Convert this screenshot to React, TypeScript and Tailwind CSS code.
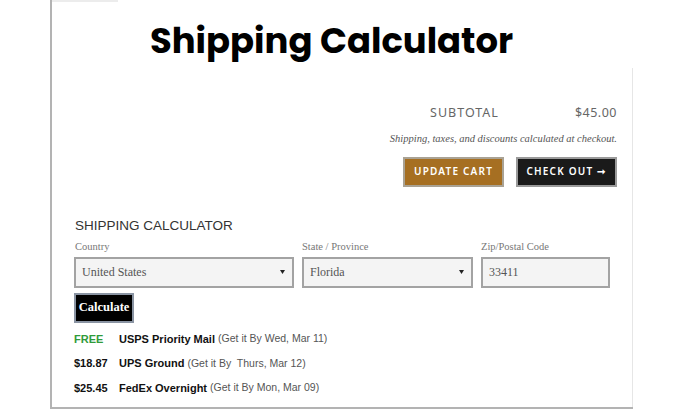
import React from "react";

const serif = { fontFamily: '"Liberation Serif", "DejaVu Serif", serif' };

function Select({ value, w }: { value: string; w: string }) {
  return (
    <div className={`${w} h-[31px] border-2 border-[#a3a3a3] bg-[#f4f4f4] flex items-center justify-between pl-[6px] pr-[7px]`}>
      <span className="text-[12px] text-[#555]" style={serif}>{value}</span>
      <svg width="5" height="4" viewBox="0 0 5 4"><path d="M0 0h5L2.5 4z" fill="#222" /></svg>
    </div>
  );
}

export default function App() {
  return (
    <div className="w-[680px] h-[409px] bg-white overflow-hidden">
      <div className="ml-[50px] w-[583px] h-[409px] border-l-2 border-b-2 border-[#b3b3b3] flex flex-col">
        <div className="h-[2px] w-[66px] bg-[#ececec]" />
        <div className="h-[66px] pl-[98px] pt-[19px]">
          <h1 className="text-[35.4px] leading-[40px] font-bold text-black" style={{ fontFamily: 'Poppins, Inter, "Noto Sans", sans-serif' }}>
            Shipping Calculator
          </h1>
        </div>
        <div className="flex-1 border-r border-[#e6e6e6] flex flex-col pr-[15px]">
          <div className="flex justify-end items-center mt-[37px] h-[16px] text-[12.5px] text-[#666] tracking-[1px]" style={{ fontFamily: '"Noto Sans", "Open Sans", sans-serif' }}>
            <span className="mr-[76px]">SUBTOTAL</span>
            <span className="tracking-[0.5px]">$45.00</span>
          </div>
          <div className="flex justify-end mt-[10px] text-[10.5px] italic text-[#555]" style={serif}>
            Shipping, taxes, and discounts calculated at checkout.
          </div>
          <div className="flex justify-end gap-[12px] mt-[10px]">
            <div className="w-[101px] h-[30px] bg-[#a66f22] border-2 border-[#a9a294] flex items-center justify-center text-white text-[10px] font-semibold tracking-[1.2px]" style={{ fontFamily: '"Noto Sans", "Open Sans", sans-serif' }}>
              UPDATE CART
            </div>
            <div className="w-[101px] h-[30px] bg-[#1a1a1a] border-2 border-[#9a9a9a] flex items-center justify-center text-white text-[10px] font-semibold tracking-[1.2px]" style={{ fontFamily: '"Noto Sans", "Open Sans", sans-serif' }}>
              CHECK OUT <span className="ml-[4px] font-bold">➞</span>
            </div>
          </div>
          <div className="pl-[22px] mt-[30px]" style={{ fontFamily: '"Liberation Sans", Arial, sans-serif' }}>
            <div className="ml-[1px] text-[13.5px] leading-[18px] text-[#333]">SHIPPING CALCULATOR</div>
            <div className="flex mt-[5px]">
              <div className="flex flex-col">
                <span className="ml-[1px] text-[10.5px] text-[#777] leading-[13px] mb-[4px]" style={serif}>Country</span>
                <Select value="United States" w="w-[220px]" />
              </div>
              <div className="flex flex-col ml-[8px]">
                <span className="text-[10.5px] text-[#777] leading-[13px] mb-[4px]" style={serif}>State / Province</span>
                <Select value="Florida" w="w-[171px]" />
              </div>
              <div className="flex flex-col ml-[8px]">
                <span className="text-[10.5px] text-[#777] leading-[13px] mb-[4px]" style={serif}>Zip/Postal Code</span>
                <div className="w-[129px] h-[31px] border-2 border-[#a3a3a3] bg-[#f4f4f4] flex items-center pl-[6px]">
                  <span className="text-[12px] text-[#555]" style={serif}>33411</span>
                </div>
              </div>
            </div>
            <div className="mt-[5px] w-[60px] h-[30px] bg-black border-2 border-[#8a94a3] flex items-center justify-center text-white text-[12.5px] font-bold" style={serif}>
              Calculate
            </div>
            <div className="mt-[4px] flex flex-col">
              {[
                { p: "FREE", c: "text-[#2f9b3a]", n: "USPS Priority Mail", d: "(Get it By Wed, Mar 11)" },
                { p: "$18.87", c: "text-[#111]", n: "UPS Ground", d: "(Get it By  Thurs, Mar 12)" },
                { p: "$25.45", c: "text-[#111]", n: "FedEx Overnight", d: "(Get it By Mon, Mar 09)" },
              ].map((r) => (
                <div key={r.p} className="flex items-center h-[24.5px]">
                  <span className={`w-[45px] text-[11px] font-bold ${r.c}`}>{r.p}</span>
                  <span className="text-[11px] font-bold text-[#111] whitespace-pre">{r.n} </span>
                  <span className="text-[10.5px] text-[#555] whitespace-pre">{r.d}</span>
                </div>
              ))}
            </div>
          </div>
        </div>
      </div>
    </div>
  );
}
